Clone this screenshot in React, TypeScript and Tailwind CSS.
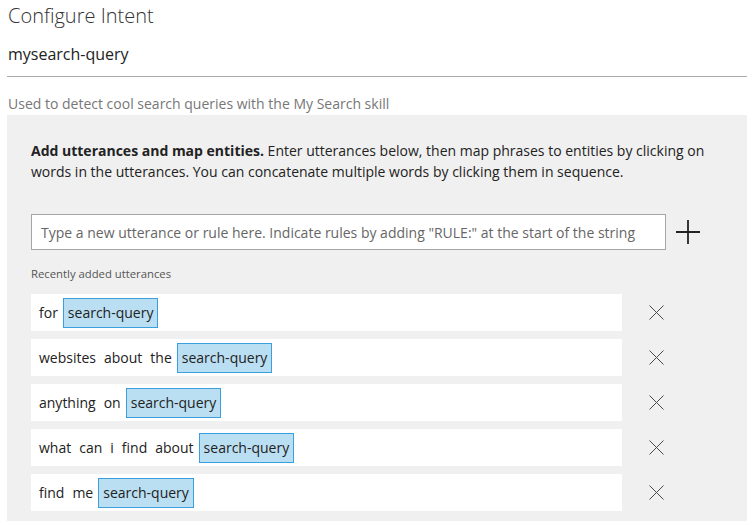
const UTTERANCES = [
  { words: ['for'], entity: 'search-query' },
  { words: ['websites', 'about', 'the'], entity: 'search-query' },
  { words: ['anything', 'on'], entity: 'search-query' },
  { words: ['what', 'can', 'i', 'find', 'about'], entity: 'search-query' },
  { words: ['find', 'me'], entity: 'search-query' },
];

function PlusIcon() {
  return (
    <svg width="26" height="26" viewBox="0 0 26 26" className="text-[#222]">
      <path d="M13 1v24M1 13h24" stroke="currentColor" strokeWidth="1.8" fill="none" />
    </svg>
  );
}

function CloseIcon() {
  return (
    <svg width="15" height="15" viewBox="0 0 15 15" className="text-[#4a4a4a]">
      <path d="M0.5 0.5l14 14M14.5 0.5l-14 14" stroke="currentColor" strokeWidth="1" fill="none" />
    </svg>
  );
}

export default function App() {
  return (
    <div className="w-[754px] h-[525px] overflow-hidden bg-white px-[7px] font-['Open_Sans',sans-serif]">
      {/* Header */}
      <h1 className="pl-px pt-[2px] text-[20px] leading-[28px] font-light text-[#333]">Configure Intent</h1>
      <div className="mt-[13px] border-b border-[#aaa] pl-px pb-[11px] text-[16px] leading-[22px] text-[#222]">
        mysearch-query
      </div>
      <p className="mt-[18px] pl-px text-[14px] leading-[18px] text-[#777]">
        Used to detect cool search queries with the My Search skill
      </p>

      {/* Utterances panel */}
      <section className="mt-[2px] bg-[#f0f0f0] pl-[24px] pt-[25px] pb-[10px]">
        <p className="text-[14px] leading-[21px] text-[#222]">
          <span className="font-bold">Add utterances and map entities.</span> Enter utterances below, then map phrases to
          entities by clicking on
          <br />
          words in the utterances. You can concatenate multiple words by clicking them in sequence.
        </p>

        <div className="mt-[32px] flex items-center">
          <div className="flex h-[36px] w-[635px] items-center border border-[#a6a6a6] bg-white px-[9px] text-[14px] text-[#666]">
            Type a new utterance or rule here. Indicate rules by adding "RULE:" at the start of the string
          </div>
          <div className="flex w-[44px] justify-center">
            <PlusIcon />
          </div>
        </div>

        <p className="mt-[16px] text-[11.3px] leading-[16px] text-[#555]">Recently added utterances</p>

        <div className="mt-[12px] flex flex-col gap-[8px]">
          {UTTERANCES.map((u, i) => (
            <div key={i} className="flex items-center">
              <div className="flex h-[37px] w-[591px] items-center bg-white pl-[8px] text-[14px] text-[#222]">
                {u.words.map((w, j) => (
                  <span key={j} className={j === u.words.length - 1 ? 'mr-[5px]' : 'mr-[8px]'}>
                    {w}
                  </span>
                ))}
                <span className="flex h-[30px] items-center border border-[#3a9fdc] bg-[#badff3] px-[4px]">
                  {u.entity}
                </span>
              </div>
              <div className="flex w-[68px] justify-center">
                <CloseIcon />
              </div>
            </div>
          ))}
        </div>
      </section>
    </div>
  );
}
